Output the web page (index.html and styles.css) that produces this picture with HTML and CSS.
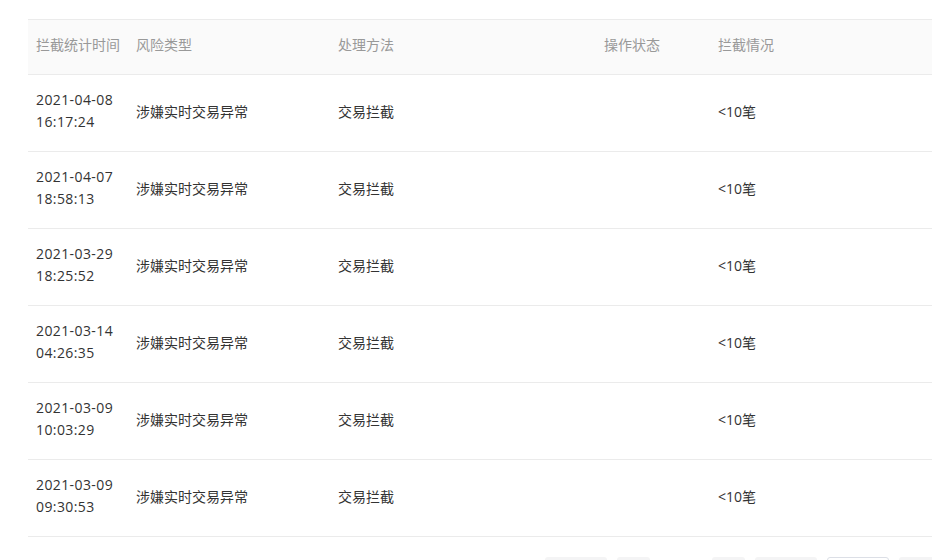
FILE: index.html
```html
<!DOCTYPE html>
<html lang="zh-CN">
<head>
<meta charset="utf-8">
<title>拦截记录</title>
<link rel="stylesheet" href="styles.css">
</head>
<body>
<div class="page">
  <table class="grid">
    <colgroup>
      <col class="c1"><col class="c2"><col class="c3"><col class="c4"><col class="c5">
    </colgroup>
    <thead>
      <tr><th>拦截统计时间</th><th>风险类型</th><th>处理方法</th><th>操作状态</th><th>拦截情况</th></tr>
    </thead>
    <tbody>
      <tr><td><div class="dt">2021-04-08<br>16:17:24</div></td><td>涉嫌实时交易异常</td><td>交易拦截</td><td></td><td>&lt;10笔</td></tr>
      <tr><td><div class="dt">2021-04-07<br>18:58:13</div></td><td>涉嫌实时交易异常</td><td>交易拦截</td><td></td><td>&lt;10笔</td></tr>
      <tr><td><div class="dt">2021-03-29<br>18:25:52</div></td><td>涉嫌实时交易异常</td><td>交易拦截</td><td></td><td>&lt;10笔</td></tr>
      <tr><td><div class="dt">2021-03-14<br>04:26:35</div></td><td>涉嫌实时交易异常</td><td>交易拦截</td><td></td><td>&lt;10笔</td></tr>
      <tr><td><div class="dt">2021-03-09<br>10:03:29</div></td><td>涉嫌实时交易异常</td><td>交易拦截</td><td></td><td>&lt;10笔</td></tr>
      <tr><td><div class="dt">2021-03-09<br>09:30:53</div></td><td>涉嫌实时交易异常</td><td>交易拦截</td><td></td><td>&lt;10笔</td></tr>
    </tbody>
  </table>
  <div class="pager">
    <span class="pbtn wide"></span>
    <span class="pbtn"></span>
    <span class="pgap"></span>
    <span class="pbtn"></span>
    <span class="pbtn wide"></span>
    <span class="pbtn wide active"></span>
    <span class="pbtn wide"></span>
  </div>
</div>
</body>
</html>
```
FILE: styles.css
```css
html, body {
  margin: 0;
  padding: 0;
  background: #fff;
  overflow: hidden;
}
body {
  font-family: "Open Sans", "Noto Sans CJK SC", sans-serif;
  font-size: 14px;
  color: #333;
}
.page {
  padding: 19px 0 0 28px;
  width: 1100px;
}
.grid {
  border-collapse: collapse;
  width: 1000px;
  table-layout: fixed;
}
.c1 { width: 100px; }
.c2 { width: 202px; }
.c3 { width: 266px; }
.c4 { width: 114px; }
.grid th, .grid td {
  text-align: left;
  padding: 0 8px;
  font-weight: normal;
  vertical-align: middle;
  white-space: nowrap;
}
.grid th {
  height: 48px;
  padding-bottom: 6px;
  background: #fafafa;
  color: #999;
  border-top: 1px solid #ebebeb;
  border-bottom: 1px solid #ebebeb;
}
.grid td {
  height: 71px;
  padding-bottom: 5px;
  border-bottom: 1px solid #ebebeb;
  color: #333;
}
.dt {
  line-height: 22px;
  letter-spacing: 0.4px;
}
.pager {
  display: flex;
  margin: 20px 0 0 517px;
  gap: 10px;
}
.pbtn {
  width: 33px;
  height: 28px;
  background: #f4f4f5;
  border-radius: 3px;
  flex: none;
}
.pbtn.wide { width: 62px; }
.pbtn.active {
  background: #fff;
  border: 1px solid #dcdfe6;
  width: 60px;
  box-sizing: content-box;
}
.pgap { width: 42px; flex: none; }
```
